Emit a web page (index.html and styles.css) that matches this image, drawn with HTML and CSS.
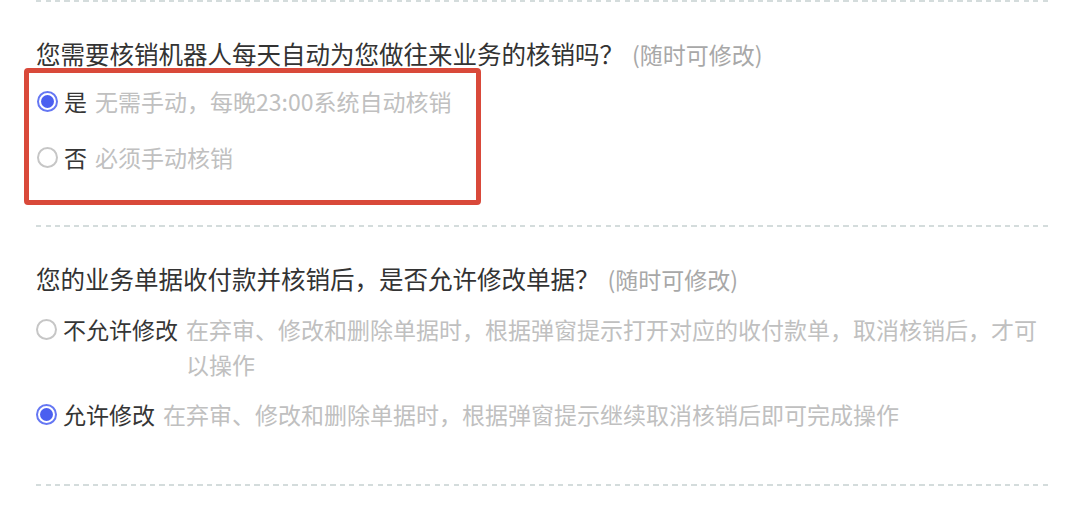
FILE: index.html
```html
<!DOCTYPE html>
<html lang="zh-CN">
<head>
<meta charset="utf-8">
<title>核销设置</title>
<link rel="stylesheet" href="styles.css">
</head>
<body>
<div class="page">
  <div class="divider"></div>
  <section class="section">
    <div class="question">您需要核销机器人每天自动为您做往来业务的核销吗？<span class="hint">(随时可修改)</span></div>
    <div class="options options-boxed">
      <div class="option">
        <span class="radio checked"></span>
        <span class="label">是</span>
        <span class="desc">无需手动，每晚23:00系统自动核销</span>
      </div>
      <div class="option">
        <span class="radio"></span>
        <span class="label">否</span>
        <span class="desc">必须手动核销</span>
      </div>
    </div>
  </section>
  <div class="divider"></div>
  <section class="section">
    <div class="question">您的业务单据收付款并核销后，是否允许修改单据？<span class="hint">(随时可修改)</span></div>
    <div class="options options-plain">
      <div class="option">
        <span class="radio"></span>
        <span class="label">不允许修改</span>
        <span class="desc">在弃审、修改和删除单据时，根据弹窗提示打开对应的收付款单，取消核销后，才可以操作</span>
      </div>
      <div class="option">
        <span class="radio checked"></span>
        <span class="label">允许修改</span>
        <span class="desc">在弃审、修改和删除单据时，根据弹窗提示继续取消核销后即可完成操作</span>
      </div>
    </div>
  </section>
  <div class="divider"></div>
</div>
</body>
</html>
```
FILE: styles.css
```css
html, body {
  margin: 0;
  padding: 0;
  background: #ffffff;
}

body {
  font-family: "Noto Sans CJK SC", "Noto Sans", sans-serif;
  color: #333333;
}

.page {
  width: 1012px;
  padding: 0 32px 0 36px;
}

.divider {
  height: 2px;
  background: repeating-linear-gradient(to right, #d4dcdc 0 5px, transparent 5px 9.5px);
}

.section {
  padding-top: 38px;
}

.question {
  font-size: 24.5px;
  line-height: 28px;
  color: #333333;
  white-space: nowrap;
}

.hint {
  margin-left: 8px;
  font-size: 23px;
  color: #a8a8a8;
}

.options {
  display: flex;
  flex-direction: column;
}

.options-boxed {
  width: 457px;
  box-sizing: border-box;
  margin-left: -12px;
  border: 5px solid #d9493a;
  border-radius: 4px;
  padding: 11px 0 25px 8px;
  gap: 21px;
  margin-bottom: 20px;
}

.options-plain {
  padding-top: 19px;
  gap: 15px;
  margin-bottom: 52px;
}

.option {
  display: flex;
  align-items: flex-start;
  font-size: 23px;
  line-height: 35px;
}

.radio {
  flex: none;
  position: relative;
  width: 21px;
  height: 21px;
  box-sizing: border-box;
  margin: 7px 6px 0 0;
  border: 2px solid #c6c6c6;
  border-radius: 50%;
  background: #ffffff;
}

.radio.checked {
  border: 2px solid #6577f3;
}

.radio.checked::after {
  content: "";
  position: absolute;
  left: 2px;
  top: 2px;
  width: 13px;
  height: 13px;
  border-radius: 50%;
  background: #4b5ff0;
}

.label {
  flex: none;
  color: #363636;
  margin-right: 8px;
}

.desc {
  flex: 1;
  color: #c0c0c0;
}
```
